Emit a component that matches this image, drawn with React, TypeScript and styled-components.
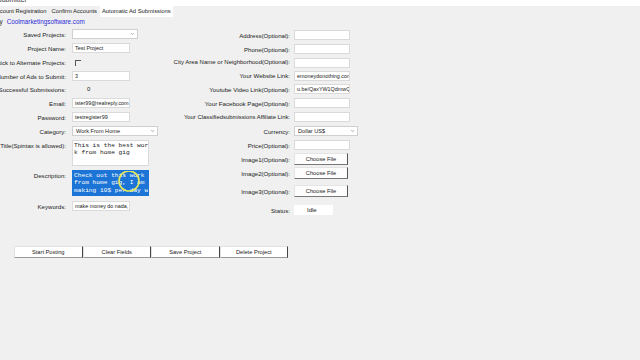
import React from "react";
import styled, { createGlobalStyle } from "styled-components";

const Global = createGlobalStyle`
  html, body { margin: 0; padding: 0; background: #f0f0f0; overflow: hidden; }
  body { font-family: "Liberation Sans", Arial, sans-serif; color: #1e1e1e; }
  * { box-sizing: border-box; }
`;

const Page = styled.div`
  width: 640px;
  height: 360px;
  display: flex;
  flex-direction: column;
  background: #f0f0f0;
  overflow: hidden;
`;

const TitleBar = styled.div`
  height: 6px;
  background: #ffffff;
  overflow: hidden;
  font-size: 7px;
  line-height: 7px;
  color: #333;
`;

const TitleText = styled.span`
  display: block;
  margin-top: -4px;
  margin-left: -3px;
`;

const TabStrip = styled.div`
  height: 11px;
  display: flex;
  align-items: stretch;
  background: #f0f0f0;
  margin-left: -9px;
`;

const Tab = styled.div<{ $active?: boolean }>`
  font-size: 5.8px;
  line-height: 11px;
  padding: 0 2px;
  margin-right: 1px;
  white-space: nowrap;
  background: ${(p) => (p.$active ? "#ffffff" : "transparent")};
  color: #222;
`;

const Content = styled.div`
  display: flex;
  flex-direction: column;
`;

const Byline = styled.div`
  height: 9px;
  font-size: 6.3px;
  line-height: 9px;
  margin-left: -4px;
  white-space: nowrap;
`;

const Link = styled.span`
  color: #2b2bd6;
  margin-left: 4px;
`;

const Columns = styled.div`
  display: flex;
  margin-top: 1px;
  height: 219px;
`;

const Column = styled.div<{ $w: number; $top?: number }>`
  width: ${(p) => p.$w}px;
  padding-top: ${(p) => p.$top ?? 0}px;
  display: flex;
  flex-direction: column;
`;

const Row = styled.div<{ $h: number; $lw: number; $gap: number; $mt?: number; $top?: boolean }>`
  height: ${(p) => p.$h}px;
  margin-top: ${(p) => p.$mt ?? 0}px;
  display: grid;
  grid-template-columns: ${(p) => p.$lw}px auto;
  column-gap: ${(p) => p.$gap}px;
  align-items: ${(p) => (p.$top ? "start" : "center")};
`;

const Label = styled.div<{ $pt?: number; $fs?: number }>`
  display: flex;
  justify-content: flex-end;
  white-space: nowrap;
  font-size: ${(p) => p.$fs ?? 6.1}px;
  line-height: 7px;
  color: #222;
  padding-top: ${(p) => p.$pt ?? 0}px;
`;

const Input = styled.div<{ $w: number }>`
  width: ${(p) => p.$w}px;
  height: 10px;
  background: #ffffff;
  border: 1px solid #dadada;
  font-size: 5.4px;
  line-height: 8px;
  padding-left: 2px;
  white-space: nowrap;
  overflow: hidden;
  color: #222;
`;

const SelectBox = styled.div<{ $w: number }>`
  width: ${(p) => p.$w}px;
  height: 10px;
  background: #ffffff;
  border: 1px solid #cfcfcf;
  font-size: 5.6px;
  line-height: 8px;
  padding-left: 3px;
  display: flex;
  justify-content: space-between;
  white-space: nowrap;
  color: #222;
`;

const Chevron = styled.svg`
  width: 5px;
  height: 8px;
  margin-right: 2px;
`;

const Check = styled.div`
  width: 6px;
  height: 6px;
  margin-left: 3px;
  border-top: 1px solid #555;
  border-left: 1px solid #555;
`;

const Value = styled.div`
  font-size: 6px;
  padding-left: 15px;
  color: #222;
`;

const TextArea = styled.div<{ $selected?: boolean }>`
  position: relative;
  width: 77px;
  height: 26px;
  background: ${(p) => (p.$selected ? "#1c74d6" : "#ffffff")};
  border: 1px solid ${(p) => (p.$selected ? "#1c74d6" : "#dadada")};
  color: ${(p) => (p.$selected ? "#ffffff" : "#222")};
  font-family: "Liberation Mono", "Courier New", monospace;
  font-size: 6.2px;
  line-height: 7.4px;
  padding: 1px 1px;
  white-space: pre;
  overflow: hidden;
`;

const Cursor = styled.svg`
  position: absolute;
  left: 44px;
  top: -2px;
  width: 24px;
  height: 24px;
  overflow: visible;
`;

const FileButton = styled.div`
  width: 54px;
  height: 12px;
  background: #fdfdfd;
  border: 1px solid #e4e4e4;
  border-right: 1px solid #555;
  border-bottom: 1px solid #777;
  font-size: 5.7px;
  line-height: 10px;
  text-align: center;
  color: #222;
`;

const Status = styled.div`
  width: 39px;
  height: 10px;
  background: #ffffff;
  font-size: 6px;
  line-height: 10px;
  padding-left: 13px;
  color: #222;
`;

const ButtonBar = styled.div`
  display: flex;
  margin-left: 14px;
`;

const Button = styled.div`
  width: 68.5px;
  height: 12px;
  background: #ffffff;
  border: 1px solid #e2e2e2;
  border-right: 1px solid #444;
  border-bottom: 1px solid #999;
  font-size: 5.7px;
  line-height: 10px;
  text-align: center;
  color: #222;
`;

const ChevronIcon = () => (
  <Chevron viewBox="0 0 5 8">
    <path d="M1 3.2 L2.5 4.7 L4 3.2" stroke="#888" strokeWidth="0.7" fill="none" />
  </Chevron>
);

const L = 66;
const LG = 6;
const R = 124;
const RG = 4;

export default function App() {
  return (
    <Page>
      <Global />
      <TitleBar>
        <TitleText>Submitter</TitleText>
      </TitleBar>
      <TabStrip>
        <Tab>Account Registration</Tab>
        <Tab>Confirm Accounts</Tab>
        <Tab $active>Automatic Ad Submissions</Tab>
      </TabStrip>
      <Content>
        <Byline>
          by<Link>Coolmarketingsoftware.com</Link>
        </Byline>
        <Columns>
          <Column $w={166}>
            <Row $h={14} $lw={L} $gap={LG}>
              <Label>Saved Projects:</Label>
              <SelectBox $w={66}>
                <span />
                <ChevronIcon />
              </SelectBox>
            </Row>
            <Row $h={14} $lw={L} $gap={LG}>
              <Label>Project Name:</Label>
              <Input $w={58}>Test Project</Input>
            </Row>
            <Row $h={15} $lw={L} $gap={LG}>
              <Label>Stick to Alternate Projects:</Label>
              <Check />
            </Row>
            <Row $h={12} $lw={L} $gap={LG}>
              <Label>Number of Ads to Submit:</Label>
              <Input $w={58}>3</Input>
            </Row>
            <Row $h={14} $lw={L} $gap={LG}>
              <Label>Successful Submissions:</Label>
              <Value>0</Value>
            </Row>
            <Row $h={14} $lw={L} $gap={LG}>
              <Label>Email:</Label>
              <Input $w={58}>ister99@realreply.com</Input>
            </Row>
            <Row $h={14} $lw={L} $gap={LG}>
              <Label>Password:</Label>
              <Input $w={58}>testregister99</Input>
            </Row>
            <Row $h={14} $lw={L} $gap={LG}>
              <Label>Category:</Label>
              <SelectBox $w={86}>
                <span>Work From Home</span>
                <ChevronIcon />
              </SelectBox>
            </Row>
            <Row $h={26} $lw={L} $gap={LG} $mt={2} $top>
              <Label $pt={2}>Title(Spintax is allowed):</Label>
              <TextArea>{"This is the best wor\nk from home gig"}</TextArea>
            </Row>
            <Row $h={26} $lw={L} $gap={LG} $mt={4} $top>
              <Label $pt={2}>Description:</Label>
              <TextArea $selected>
                {"Check out this work\nfrom home gig, I am\nmaking 10$ per day w"}
                <Cursor viewBox="0 0 24 24">
                  <circle cx="12" cy="12" r="10" stroke="#e6ea5a" strokeWidth="1.6" fill="none" />
                </Cursor>
              </TextArea>
            </Row>
            <Row $h={12} $lw={L} $gap={LG} $mt={4}>
              <Label>Keywords:</Label>
              <Input $w={58}>make money do nada,</Input>
            </Row>
          </Column>
          <Column $w={200} $top={1}>
            <Row $h={14} $lw={R} $gap={RG}>
              <Label>Address(Optional):</Label>
              <Input $w={56} />
            </Row>
            <Row $h={14} $lw={R} $gap={RG}>
              <Label>Phone(Optional):</Label>
              <Input $w={56} />
            </Row>
            <Row $h={13} $lw={R} $gap={RG}>
              <Label $fs={6}>City Area Name or Neighborhood(Optional):</Label>
              <Input $w={56} />
            </Row>
            <Row $h={13} $lw={R} $gap={RG}>
              <Label>Your Website Link:</Label>
              <Input $w={56}>emoneydonothing.con</Input>
            </Row>
            <Row $h={14} $lw={R} $gap={RG}>
              <Label>Youtube Video Link(Optional):</Label>
              <Input $w={56}>u.be/QaxYW1QdmwQ</Input>
            </Row>
            <Row $h={14} $lw={R} $gap={RG}>
              <Label>Your Facebook Page(Optional):</Label>
              <Input $w={56} />
            </Row>
            <Row $h={14} $lw={R} $gap={RG}>
              <Label $fs={5.9}>Your Classifiedsubmissions Affiliate Link:</Label>
              <Input $w={56} />
            </Row>
            <Row $h={14} $lw={R} $gap={RG}>
              <Label>Currency:</Label>
              <SelectBox $w={64}>
                <span>Dollar US$</span>
                <ChevronIcon />
              </SelectBox>
            </Row>
            <Row $h={14} $lw={R} $gap={RG}>
              <Label>Price(Optional):</Label>
              <Input $w={56} />
            </Row>
            <Row $h={14} $lw={R} $gap={RG}>
              <Label>Image1(Optional):</Label>
              <FileButton>Choose File</FileButton>
            </Row>
            <Row $h={14} $lw={R} $gap={RG}>
              <Label>Image2(Optional):</Label>
              <FileButton>Choose File</FileButton>
            </Row>
            <Row $h={12} $lw={R} $gap={RG} $mt={5}>
              <Label>Image3(Optional):</Label>
              <FileButton>Choose File</FileButton>
            </Row>
            <Row $h={10} $lw={R} $gap={RG} $mt={8}>
              <Label>Status:</Label>
              <Status>Idle</Status>
            </Row>
          </Column>
        </Columns>
        <ButtonBar>
          <Button>Start Posting</Button>
          <Button>Clear Fields</Button>
          <Button>Save Project</Button>
          <Button>Delete Project</Button>
        </ButtonBar>
      </Content>
    </Page>
  );
}
